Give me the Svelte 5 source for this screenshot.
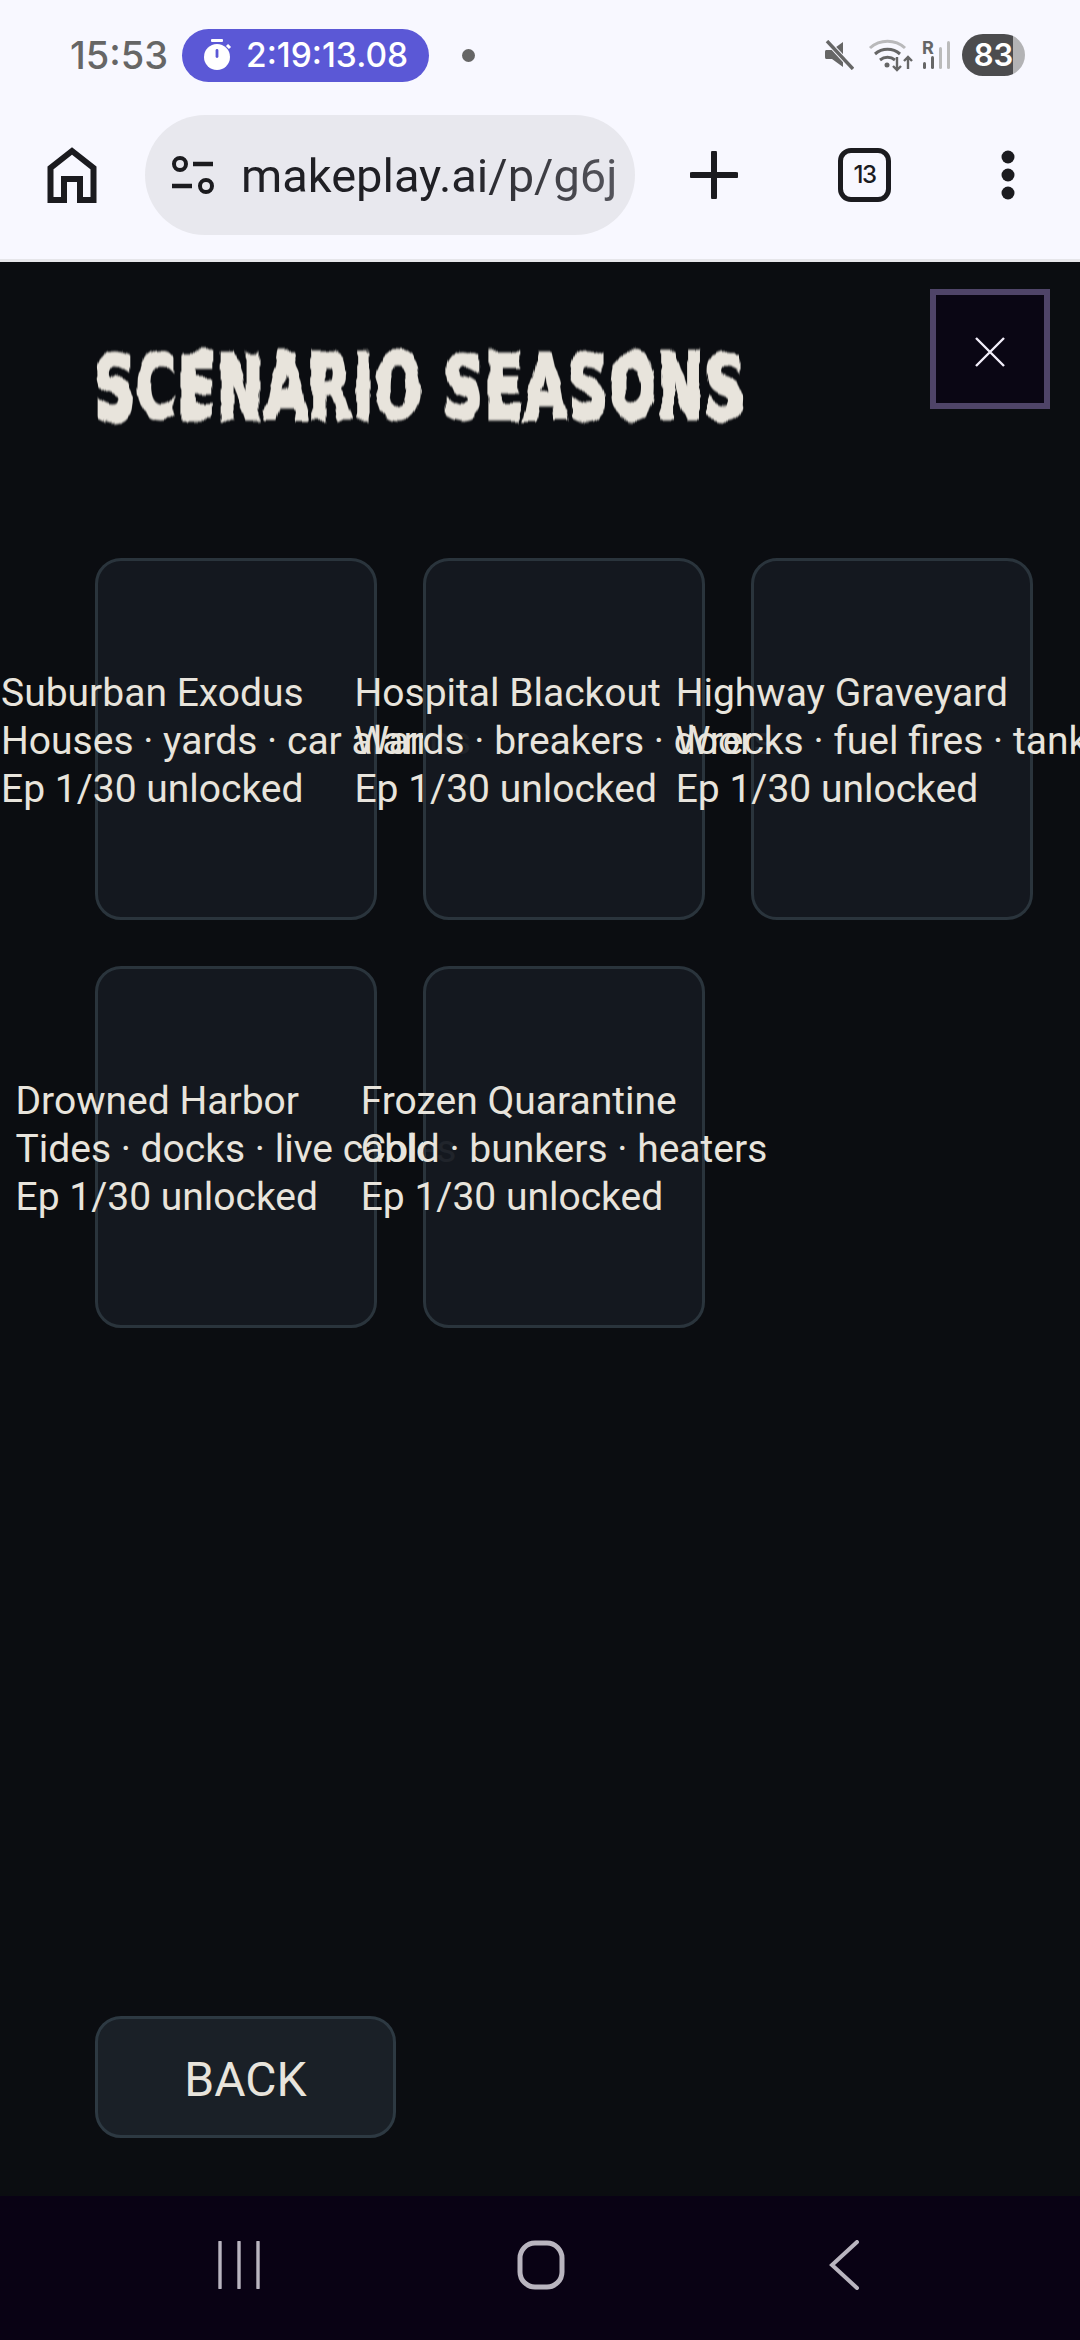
<script>
	const seasons = [
		{ name: 'Suburban Exodus', tags: 'Houses · yards · car alarms', progress: 'Ep 1/30 unlocked' },
		{ name: 'Hospital Blackout', tags: 'Wards · breakers · doors', progress: 'Ep 1/30 unlocked' },
		{ name: 'Highway Graveyard', tags: 'Wrecks · fuel fires · tanks', progress: 'Ep 1/30 unlocked' },
		{ name: 'Drowned Harbor', tags: 'Tides · docks · live cables', progress: 'Ep 1/30 unlocked' },
		{ name: 'Frozen Quarantine', tags: 'Cold · bunkers · heaters', progress: 'Ep 1/30 unlocked' }
	];
</script>

<svg class="defs" aria-hidden="true">
	<filter id="drip" x="-5%" y="-20%" width="110%" height="140%">
		<feTurbulence type="fractalNoise" baseFrequency="0.03 0.05" numOctaves="2" seed="7" result="noise" />
		<feDisplacementMap in="SourceGraphic" in2="noise" scale="12" xChannelSelector="R" yChannelSelector="G" />
		<feGaussianBlur stdDeviation="1" />
	</filter>
</svg>

<div class="screen">
	<header class="chrome">
		<div class="status">
			<span class="time">15:53</span>
			<span class="timer">
				<svg width="30" height="34" viewBox="0 0 30 34">
					<rect x="9" y="1" width="12" height="3" rx="1" fill="#fff" />
					<circle cx="15" cy="19" r="13" fill="#fff" />
					<path d="M25 7l3 3" stroke="#fff" stroke-width="3" />
					<rect x="13.6" y="11" width="2.8" height="9" rx="1.4" fill="#5b58d6" />
				</svg>
				2:19:13.08
			</span>
			<span class="dot"></span>
			<span class="spacer"></span>
			<svg class="mute" width="30" height="30" viewBox="0 0 30 30">
				<path d="M2 10h6l11-8v25l-11-8H2a2 2 0 0 1-1-2v-5a2 2 0 0 1 1-2z" fill="#666" />
				<path d="M3 1l26 28" stroke="#f8f8ff" stroke-width="5.5" />
				<path d="M3 1l26 28" stroke="#666" stroke-width="3.4" />
			</svg>
			<svg class="wifi" width="46" height="36" viewBox="0 0 46 36">
				<path d="M2 11a26 26 0 0 1 35 0" fill="none" stroke="#b9b9bb" stroke-width="3" />
				<path d="M7 17a19 19 0 0 1 25 0M12 23a12 12 0 0 1 15 0" fill="none" stroke="#666" stroke-width="3" />
				<circle cx="19" cy="28" r="2.5" fill="#666" />
				<path d="M29 20v13m-4-4l4 4 4-4M40 32v-12m-4 4l4-4 4 4" fill="none" stroke="#666" stroke-width="2.4" />
			</svg>
			<div class="signal">
				<span class="roam">R</span>
				<svg width="28" height="30" viewBox="0 0 28 30">
					<rect x="1" y="22" width="3" height="7" rx="1.5" fill="#666" />
					<rect x="9" y="16" width="3" height="13" rx="1.5" fill="#666" />
					<rect x="17" y="7" width="3" height="22" rx="1.5" fill="#bbb" />
					<rect x="25" y="1" width="3" height="28" rx="1.5" fill="#bbb" />
				</svg>
			</div>
			<span class="battery">83</span>
		</div>

		<div class="toolbar">
			<svg class="home" width="50" height="56" viewBox="0 0 50 56">
				<path d="M3.5 53V21L25 4l21.500 17v32H33V32H17v21z" fill="none" stroke="#1b1b1f" stroke-width="6" />
			</svg>
			<div class="url">
				<svg width="46" height="40" viewBox="0 0 46 40">
					<circle cx="10" cy="9" r="6" fill="none" stroke="#1b1b1f" stroke-width="4" />
					<path d="M23 9h20M2 31h20" stroke="#1b1b1f" stroke-width="4.5" />
					<circle cx="36" cy="31" r="6" fill="none" stroke="#1b1b1f" stroke-width="4" />
				</svg>
				<span class="address">makeplay.ai/p/g6j</span>
			</div>
			<svg class="plus" width="48" height="48" viewBox="0 0 48 48">
				<path d="M24 2v44M2 24h44" stroke="#1b1b1f" stroke-width="6" stroke-linecap="round" />
			</svg>
			<span class="tabs">13</span>
			<svg class="more" width="14" height="50" viewBox="0 0 14 50">
				<circle cx="7" cy="7" r="6.5" fill="#1b1b1f" />
				<circle cx="7" cy="25" r="6.5" fill="#1b1b1f" />
				<circle cx="7" cy="43" r="6.5" fill="#1b1b1f" />
			</svg>
		</div>
	</header>

	<main class="page">
		<button class="close" aria-label="Close">
			<svg width="30" height="30" viewBox="0 0 30 30">
				<path d="M1 1l28 28M29 1L1 29" stroke="#f2eefa" stroke-width="2.4" />
			</svg>
		</button>

		<h1>SCENARIO SEASONS</h1>

		<div class="grid">
			{#each seasons as season}
				<div class="card">
					<div class="info">
						<div>{season.name}</div>
						<div>{season.tags}</div>
						<div>{season.progress}</div>
					</div>
				</div>
			{/each}
		</div>

		<button class="back">BACK</button>
	</main>

	<nav class="softkeys">
		<svg class="recents" width="44" height="48" viewBox="0 0 44 48">
			<path d="M3 1v46M22 1v46M41 1v46" stroke="#b9b5bf" stroke-width="3.4" stroke-linecap="round" />
		</svg>
		<svg class="overview" width="48" height="50" viewBox="0 0 48 50">
			<rect x="3" y="3" width="42" height="44" rx="15" fill="none" stroke="#b9b5bf" stroke-width="5" />
		</svg>
		<svg class="goback" width="32" height="50" viewBox="0 0 32 50">
			<path d="M29 2L4 25l25 23" fill="none" stroke="#b9b5bf" stroke-width="4" stroke-linecap="round" />
		</svg>
	</nav>
</div>

<style>
	:global(body) {
		margin: 0;
		background: #0b0d11;
	}

	.defs {
		display: block;
		width: 0;
		height: 0;
	}

	.screen {
		width: 1080px;
		height: 2340px;
		display: flex;
		flex-direction: column;
		overflow: hidden;
		font-family: Roboto, sans-serif;
	}

	.chrome {
		height: 262px;
		box-sizing: border-box;
		background: #f8f8ff;
		border-bottom: 3px solid #e6e6ea;
		flex: none;
	}

	.status {
		height: 110px;
		box-sizing: border-box;
		display: flex;
		align-items: center;
		padding-left: 70px;
		padding-right: 55px;
		font-family: Inter, sans-serif;
	}

	.time {
		font-size: 38px;
		font-weight: 500;
		color: #666;
		width: 112px;
	}

	.timer {
		display: flex;
		align-items: center;
		gap: 14px;
		width: 247px;
		height: 53px;
		box-sizing: border-box;
		padding-left: 20px;
		border-radius: 27px;
		background: #5b58d6;
		color: #fff;
		font-size: 33.5px;
		font-weight: 500;
		white-space: nowrap;
	}

	.dot {
		width: 13px;
		height: 13px;
		margin-left: 33px;
		border-radius: 50%;
		background: #666;
	}

	.spacer {
		flex: 1;
	}

	.wifi {
		margin-left: 14px;
	}

	.signal {
		position: relative;
		margin-left: 8px;
		margin-right: 12px;
		width: 28px;
		height: 30px;
		display: flex;
		align-items: flex-end;
	}

	.roam {
		position: absolute;
		left: 0;
		top: -3px;
		font-size: 18px;
		font-weight: 700;
		color: #666;
	}

	.battery {
		width: 63px;
		height: 42px;
		border-radius: 21px;
		background: linear-gradient(90deg, #4c4c4e 81%, #b3b3b5 81%);
		color: #fff;
		font-size: 31px;
		font-weight: 600;
		line-height: 42px;
		text-align: center;
	}

	.toolbar {
		height: 149px;
		display: flex;
		align-items: flex-start;
		padding-top: 5px;
	}

	.home {
		margin-left: 47px;
		margin-top: 32px;
	}

	.url {
		margin-left: 48px;
		width: 490px;
		height: 120px;
		box-sizing: border-box;
		padding-left: 25px;
		border-radius: 60px;
		background: #e8e8ee;
		display: flex;
		align-items: center;
		gap: 25px;
		overflow: hidden;
	}

	.address {
		font-size: 47px;
		white-space: nowrap;
		background: linear-gradient(90deg, #1f1f24 55%, #55555c 100%);
		-webkit-background-clip: text;
		background-clip: text;
		color: transparent;
	}

	.plus {
		margin-left: 55px;
		margin-top: 36px;
	}

	.tabs {
		margin-left: 100px;
		margin-top: 33px;
		width: 53px;
		height: 54px;
		box-sizing: border-box;
		border: 5px solid #1b1b1f;
		border-radius: 13px;
		font-family: Inter, sans-serif;
		font-size: 24px;
		font-weight: 500;
		line-height: 44px;
		text-align: center;
		letter-spacing: -1.5px;
		color: #1b1b1f;
	}

	.more {
		margin-left: 110px;
		margin-top: 35px;
	}

	.page {
		position: relative;
		flex: 1;
		display: flex;
		flex-direction: column;
		padding: 76px 47px 58px 95px;
		background: #0b0d11;
	}

	h1 {
		margin: 0 0 120px;
		font-family: 'DejaVu Sans', sans-serif;
		font-size: 88px;
		font-weight: 700;
		line-height: 100px;
		letter-spacing: 3px;
		white-space: nowrap;
		color: #e8e4dc;
		-webkit-text-stroke: 5px #e8e4dc;
		transform: scaleX(0.62);
		transform-origin: left center;
		filter: url(#drip);
	}

	.close {
		position: absolute;
		top: 27px;
		right: 30px;
		width: 120px;
		height: 120px;
		padding: 6px 0 0;
		box-sizing: border-box;
		border: 6px solid #4f4468;
		background: #0a0614;
		display: flex;
		align-items: center;
		justify-content: center;
	}

	.grid {
		display: grid;
		grid-template-columns: repeat(3, 282px);
		grid-auto-rows: 362px;
		gap: 46px;
	}

	.card {
		box-sizing: border-box;
		isolation: isolate;
		display: flex;
		align-items: center;
		justify-content: center;
		border: 3px solid #2a343c;
		border-radius: 26px;
		background: rgba(21, 25, 33, 0.95);
	}

	.info {
		flex: none;
		padding-top: 3px;
		font-size: 39px;
		line-height: 48px;
		white-space: nowrap;
		color: #e8e4dc;
	}

	.back {
		margin-top: auto;
		width: 301px;
		height: 122px;
		padding: 5px 0 0;
		border: 3px solid #2d3942;
		border-radius: 26px;
		background: #1a2027;
		color: #e8e4dc;
		font-family: Roboto, sans-serif;
		font-size: 48px;
	}

	.softkeys {
		flex: none;
		height: 144px;
		box-sizing: border-box;
		background: #090214;
		display: flex;
		align-items: center;
		padding-left: 217px;
		padding-bottom: 6px;
	}

	.overview {
		margin-left: 256px;
	}

	.goback {
		margin-left: 263px;
	}
</style>
